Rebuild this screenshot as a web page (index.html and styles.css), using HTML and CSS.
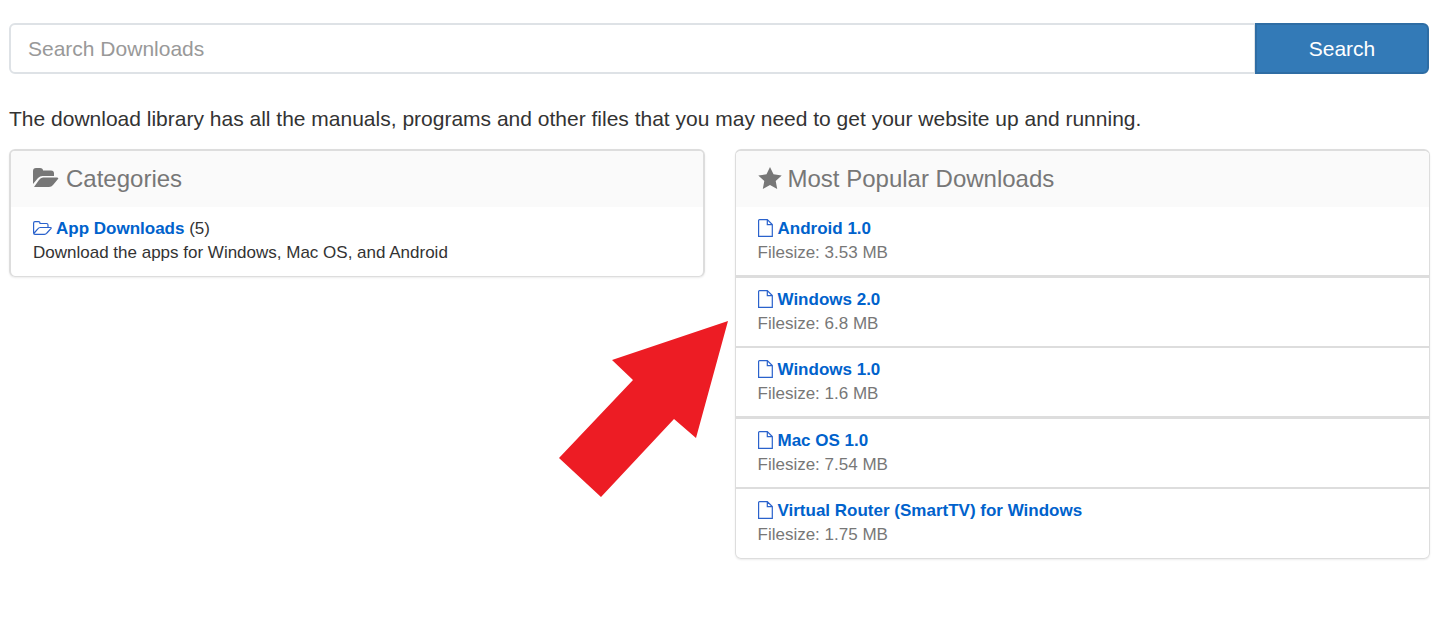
FILE: index.html
```html
<!DOCTYPE html>
<html lang="en">
<head>
<meta charset="utf-8">
<meta name="viewport" content="width=device-width, initial-scale=1">
<title>Downloads</title>
<link rel="stylesheet" href="styles.css">
</head>
<body>
<svg class="sprite" aria-hidden="true">
  <symbol id="file" viewBox="0 0 15 18"><path d="M1.500.6h7.800l5 5v11.800H.6V1.500Q.6.600 1.500.6zM9.300.6v5h5" fill="none" stroke="currentColor" stroke-width="1.2"/></symbol>
</svg>
<main class="page">
  <form class="search">
    <input class="search-input" type="text" placeholder="Search Downloads" aria-label="Search Downloads">
    <button class="search-button" type="submit">Search</button>
  </form>
  <p class="intro">The download library has all the manuals, programs and other files that you may need to get your website up and running.</p>
  <div class="columns">
    <section class="card card-categories">
      <h2 class="card-title">
        <svg class="title-icon title-folder" viewBox="0 0 26 20" aria-hidden="true"><path d="M0 16V3Q0 0 3 0h4q3 0 3 2.500h8q3 0 3 3V8H9.500Q7 8 5 10zM1 19l5-7q1.500-2.500 4-2.500h14q2 0 1 1.500l-5 6q-1.500 2-4 2H2z" fill="currentColor"/></svg>
        Categories
      </h2>
      <ul class="list">
        <li class="item">
          <div class="item-name"><svg class="folder" viewBox="0 0 19 14" aria-hidden="true"><path d="M.6 12V2Q.6.600 2 .6h3.500Q7 .6 7 2v.5h6.500q1.500 0 1.500 1.500v2.500M.8 12.500l4-4.700q1-1.300 2.500-1.300H17.500q1.200 0 .4 1.100l-4 4.400q-1 1.300-2.500 1.300H2Q.6 13.300.6 12" fill="none" stroke="currentColor" stroke-width="1.200"/></svg><a class="link" href="#app">App Downloads</a>&nbsp;(5)</div>
          <div>Download the apps for Windows, Mac OS, and Android</div>
        </li>
      </ul>
    </section>
    <section class="card">
      <h2 class="card-title">
        <svg class="title-icon title-star" viewBox="0 0 24 22" aria-hidden="true"><path d="M12 0l3.500 7.300 8.200 1.100-6 5.600 1.500 8-7.200-3.900L4.800 22l1.500-8-6-5.600 8.200-1.100z" fill="currentColor"/></svg>
        Most Popular Downloads
      </h2>
      <ul class="list">
        <li class="item"><div class="item-name"><svg class="file"><use href="#file"/></svg><a class="link" href="#android">Android 1.0</a></div><div class="size">Filesize: 3.53 MB</div></li>
        <li class="item"><div class="item-name"><svg class="file"><use href="#file"/></svg><a class="link" href="#windows2">Windows 2.0</a></div><div class="size">Filesize: 6.8 MB</div></li>
        <li class="item"><div class="item-name"><svg class="file"><use href="#file"/></svg><a class="link" href="#windows1">Windows 1.0</a></div><div class="size">Filesize: 1.6 MB</div></li>
        <li class="item"><div class="item-name"><svg class="file"><use href="#file"/></svg><a class="link" href="#mac">Mac OS 1.0</a></div><div class="size">Filesize: 7.54 MB</div></li>
        <li class="item"><div class="item-name"><svg class="file"><use href="#file"/></svg><a class="link" href="#router">Virtual Router (SmartTV) for Windows</a></div><div class="size">Filesize: 1.75 MB</div></li>
      </ul>
    </section>
    <svg class="arrow" viewBox="0 0 170 178" aria-hidden="true"><path d="M169 1L53 40l21 20L0 138l42 39 73-78 22 19z" fill="#ed1c24"/></svg>
  </div>
</main>
</body>
</html>
```
FILE: styles.css
```css
* { box-sizing: border-box; }
body {
  margin: 0;
  background: #fff;
  color: #333;
  font-family: "Liberation Sans", Arial, sans-serif;
  font-size: 17px;
  line-height: 24px;
}
.sprite { position: absolute; width: 0; height: 0; }
.page { padding: 23px 22px 23px 9px; }
.search { display: flex; padding-right: 1px; }
.search-input {
  flex: 1;
  min-width: 0;
  padding: 10px 17px;
  border: 2px solid #dee2e6;
  border-right-width: 1px;
  border-radius: 6px 0 0 6px;
  background: #fff;
  color: #555;
  font: inherit;
  font-size: 21px;
  line-height: 27px;
}
.search-input::placeholder { color: #999; opacity: 1; }
.search-button {
  width: 174px;
  height: 51px;
  border: 2px solid #2e6da4;
  border-radius: 0 6px 6px 0;
  background: #337ab7;
  color: #fff;
  font: inherit;
  font-size: 21px;
}
.intro {
  margin: 30px 0 15px;
  font-size: 21px;
  line-height: 30px;
}
.columns {
  position: relative;
  display: grid;
  grid-template-columns: 1fr 1fr;
  gap: 30px;
  align-items: start;
}
.card {
  overflow: hidden;
  border: 1px solid #ddd;
  border-top-width: 2px;
  border-radius: 6px;
  box-shadow: 0 1px 2px rgba(0, 0, 0, .08);
}
.card-categories { border-width: 2px 2px 1px; }
.card-title {
  display: flex;
  align-items: center;
  margin: 0;
  padding: 14px 22px;
  background: #fafafa;
  color: #777;
  font-size: 24px;
  font-weight: 400;
  line-height: 28px;
}
.title-icon { flex: none; margin-bottom: 2px; }
.title-folder { width: 26px; height: 20px; margin-right: 7px; }
.title-star { width: 24px; height: 22px; margin-right: 6px; }
.list { margin: 0; padding: 0; list-style: none; }
.item { padding: 10px 22px; }
.item:last-child { padding-bottom: 11px; }
.item + .item { border-top: 2px solid #ddd; }
.item:nth-child(even) { border-top-width: 3px; }
.item-name { display: flex; align-items: center; }
.link { color: #0062cc; font-weight: 700; text-decoration: none; }
.file { width: 15px; height: 18px; margin: 0 5px 2px 0; color: #2a62cc; }
.folder { width: 19px; height: 14px; margin: 0 4px 2px 0; color: #2a62cc; }
.size { color: #777; }
.arrow {
  position: absolute;
  top: 171px;
  right: calc(50% - 18px + 9px);
  width: 170px;
  height: 178px;
}
```
